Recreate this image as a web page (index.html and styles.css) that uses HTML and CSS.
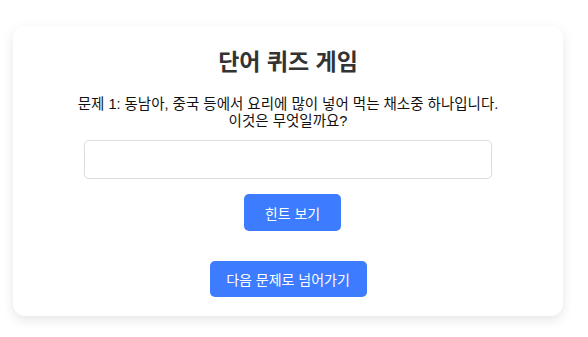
FILE: index.html
```html
<!DOCTYPE html>
<html lang="ko">
<head>
  <meta charset="UTF-8" />
  <title>단어 퀴즈 게임</title>
  <meta name="viewport" content="width=device-width, initial-scale=1.0" />
  <link rel="stylesheet" href="styles.css">
</head>
<body>

  <div class="quiz-card">
    <h1>단어 퀴즈 게임</h1>
    <p class="question">문제 1: 동남아, 중국 등에서 요리에 많이 넣어 먹는 채소중 하나입니다.<br>이것은 무엇일까요?</p>
    <input type="text" class="answer" id="answer">
    <button class="btn" id="hintBtn">힌트 보기</button>
    <div class="hint" id="hint"></div>
    <button class="btn" id="nextBtn">다음 문제로 넘어가기</button>
  </div>

</body>
</html>
```

FILE: styles.css
```css
*, *::before, *::after {
  box-sizing: border-box;
}

body {
  margin: 0;
  padding: 26px 25px 20px 13px;
  font-family: 'Liberation Sans', 'Noto Sans CJK KR', sans-serif;
  background: #fff;
  color: #111;
}

.quiz-card {
  display: flex;
  flex-direction: column;
  align-items: center;
  background: #fff;
  border-radius: 12px;
  box-shadow: 0 4px 12px rgba(0, 0, 0, 0.1);
  padding: 20px 20px 19px;
  width: 550px;
}

.quiz-card h1 {
  margin: 1px 0 0;
  font-size: 23px;
  font-weight: bold;
  color: #333;
  line-height: 30px;
}

.question {
  margin: 19px 0 10px;
  font-size: 14.5px;
  line-height: 17px;
  text-align: center;
}

.answer {
  width: 80%;
  height: 39px;
  border: 1px solid #ddd;
  border-radius: 5px;
  font-size: 16px;
  padding: 8px;
  margin: 0;
}

.btn {
  border: none;
  border-radius: 5px;
  background: #3d7bff;
  color: #fff;
  font-family: inherit;
  font-size: 14px;
  cursor: pointer;
}

#hintBtn {
  margin: 15px 0 0 9px;
  width: 97px;
  height: 37px;
}

.hint {
  height: 30px;
}

#nextBtn {
  width: 157px;
  height: 36px;
}
```
